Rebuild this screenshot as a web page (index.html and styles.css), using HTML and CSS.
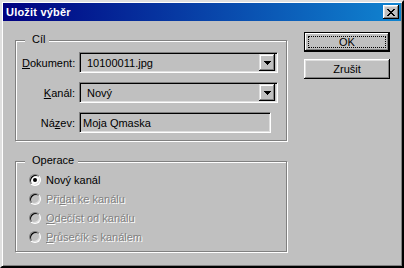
FILE: index.html
```html
<!DOCTYPE html>
<html>
<head>
<meta charset="utf-8">
<link rel="stylesheet" href="styles.css">
</head>
<body>

<div class="window">
  <div class="titlebar">
    <span class="title">Uložit výběr</span>
    <span class="close">
      <svg width="8" height="7" viewBox="0 0 8 7" shape-rendering="crispEdges">
        <path d="M0 0h2v1h-2zM6 0h2v1h-2zM1 1h2v1h-2zM5 1h2v1h-2zM2 2h4v1h-4zM3 3h2v1h-2zM2 4h4v1h-4zM1 5h2v1h-2zM5 5h2v1h-2zM0 6h2v1h-2zM6 6h2v1h-2z" fill="#000"/>
      </svg>
    </span>
  </div>

  <div class="client">
    <div class="groups">
      <div class="group target">
        <span class="legend">Cíl</span>
        <div class="form">
          <label><u>D</u>okument:</label>
          <div class="combo">
            <span class="value">10100011.jpg</span>
            <span class="arrow"><svg width="7" height="4" viewBox="0 0 7 4" shape-rendering="crispEdges"><path d="M0 0h7v1h-7zM1 1h5v1h-5zM2 2h3v1h-3zM3 3h1v1h-1z" fill="#000"/></svg></span>
          </div>

          <label><u>K</u>anál:</label>
          <div class="combo">
            <span class="value">Nový</span>
            <span class="arrow"><svg width="7" height="4" viewBox="0 0 7 4" shape-rendering="crispEdges"><path d="M0 0h7v1h-7zM1 1h5v1h-5zM2 2h3v1h-3zM3 3h1v1h-1z" fill="#000"/></svg></span>
          </div>

          <label>Ná<u>z</u>ev:</label>
          <div class="textbox">Moja Qmaska</div>
        </div>
      </div>

      <div class="group operation">
        <span class="legend">Operace</span>
        <div class="radio checked"><span class="circle"></span><span>Nový kanál</span></div>
        <div class="radio disabled"><span class="circle"></span><span>Při<u>d</u>at ke kanálu</span></div>
        <div class="radio disabled"><span class="circle"></span><span><u>O</u>dečíst od kanálu</span></div>
        <div class="radio disabled"><span class="circle"></span><span><u>P</u>růsečík s kanálem</span></div>
      </div>
    </div>

    <div class="buttons">
      <div class="btn default">OK</div>
      <div class="btn">Zrušit</div>
    </div>
  </div>
</div>

</body>
</html>
```

FILE: styles.css
```css
* {box-sizing: border-box;}
body {
  margin: 0;
  font-family: "Liberation Sans", Arial, sans-serif;
  font-size: 11px;
  color: #000;
}

.window {
  width: 404px;
  height: 268px;
  background: #c0c0c0;
  padding: 1px;
  border: 2px solid;
  border-color: #dfdfdf #000 #000 #dfdfdf;
  box-shadow: inset 1px 1px #fff, inset -1px -1px #808080;
}

.titlebar {
  height: 18px;
  display: flex;
  align-items: center;
  justify-content: space-between;
  padding: 0 2px 0 3px;
  background: linear-gradient(to right, #000080, #1084d0);
}

.title {
  color: #fff;
  font-weight: bold;
  font-size: 11px;
  letter-spacing: 0.2px;
}

.close {
  width: 16px;
  height: 14px;
  display: flex;
  align-items: center;
  justify-content: center;
  background: #c0c0c0;
  box-shadow: inset -1px -1px #000, inset 1px 1px #fff, inset -2px -2px #808080, inset 2px 2px #dfdfdf;
}

.client {
  display: flex;
  align-items: flex-start;
  padding-left: 12px;
}

.groups {
  margin-top: 19px;
}

/* etched frame */
.group {
  position: relative;
  width: 272px;
  border: 1px solid #808080;
  box-shadow: inset 1px 1px #fff, 1px 1px #fff;
}

.legend {
  position: absolute;
  top: -8px;
  left: 9px;
  padding: 0 4px 0 7px;
  background: #c0c0c0;
  line-height: 13px;
}

.target {
  padding: 11px 8px 7px 6px;
}

.form {
  display: grid;
  grid-template-columns: 53px auto;
  column-gap: 4px;
  row-gap: 9px;
  align-items: center;
}

.form label {
  text-align: right;
}

.combo, .textbox {
  height: 21px;
  border: 1px solid;
  border-color: #808080 #fff #fff #808080;
  box-shadow: inset 1px 1px #000, inset -1px -1px #dfdfdf;
  background: #c0c0c0;
}

.combo {
  width: 199px;
  display: flex;
  align-items: center;
  justify-content: space-between;
  padding: 2px 2px 2px 7px;
}

.arrow {
  width: 16px;
  height: 17px;
  display: flex;
  align-items: center;
  justify-content: center;
  box-shadow: inset -1px -1px #000, inset 1px 1px #dfdfdf, inset -2px -2px #808080, inset 2px 2px #fff;
}

.textbox {
  width: 192px;
  display: flex;
  align-items: center;
  padding-left: 3px;
}

.operation {
  margin-top: 20px;
  padding: 8px 0 5px 13px;
}

.radio {
  height: 19px;
  display: flex;
  align-items: center;
  gap: 5px;
}

.circle {
  position: relative;
  width: 12px;
  height: 12px;
  border-radius: 50%;
  border: 1px solid;
  border-color: #808080 #fff #fff #808080;
  box-shadow: inset 1px 1px #000, inset -1px -1px #dfdfdf;
  background: #fff;
}

.checked .circle::after {
  content: "";
  position: absolute;
  left: 3px;
  top: 3px;
  width: 4px;
  height: 4px;
  border-radius: 50%;
  background: #000;
}

.disabled {
  color: #808080;
  text-shadow: 1px 1px #fff;
}

.disabled .circle {
  background: #c0c0c0;
}

.buttons {
  margin-top: 11px;
  margin-left: 17px;
  display: flex;
  flex-direction: column;
  gap: 7px;
}

.btn {
  width: 86px;
  height: 20px;
  display: flex;
  align-items: center;
  justify-content: center;
  background: #c0c0c0;
  box-shadow: inset -1px -1px #000, inset 1px 1px #fff, inset -2px -2px #808080, inset 2px 2px #dfdfdf;
}

.btn.default {
  border: 1px solid #000;
  box-shadow: inset -1px -1px #000, inset 1px 1px #fff, inset -2px -2px #808080;
  outline: 1px dotted #000;
  outline-offset: -5px;
}
```
